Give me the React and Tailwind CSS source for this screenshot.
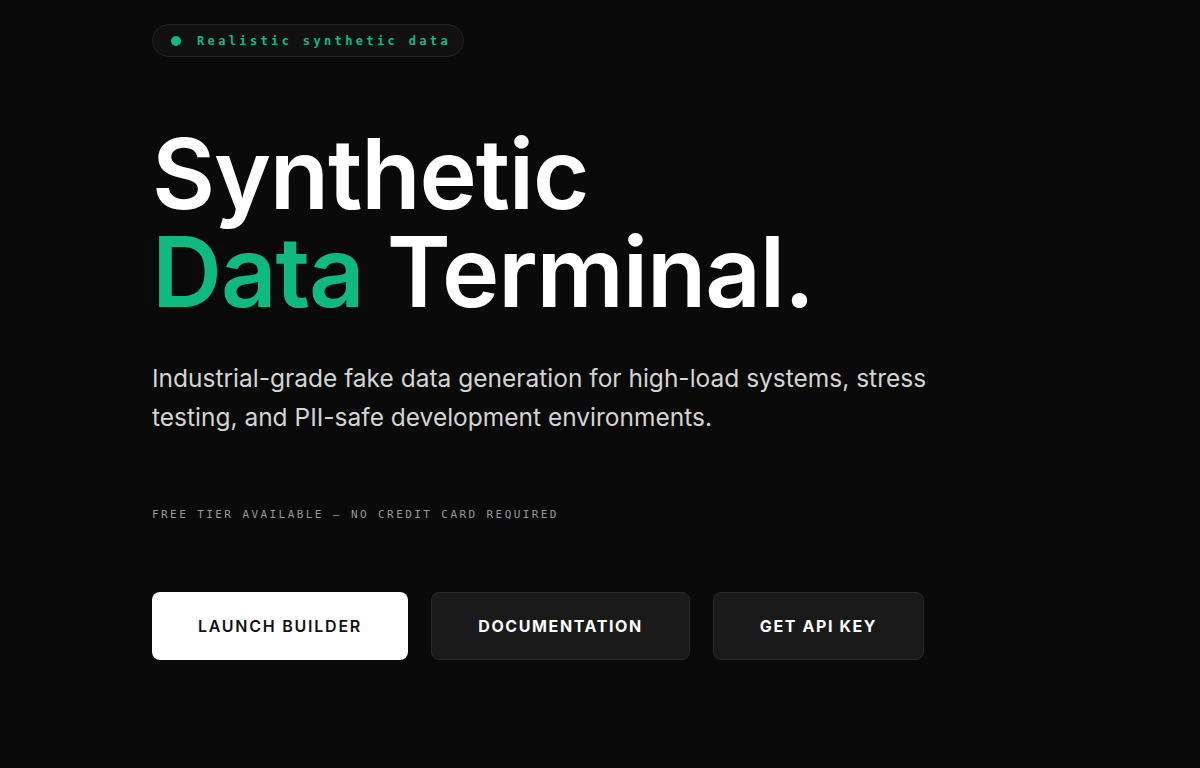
export default function App() {
  return (
    <div className="min-h-[768px] w-full bg-[#0a0a0a] text-white" style={{ fontFamily: "Inter, 'Noto Sans', sans-serif" }}>
      <div className="pl-[152px] pt-[24px]">
        <div className="inline-flex h-[33px] items-center gap-[16px] rounded-full border border-[#262626] bg-[#111111] pl-[18px] pr-[12px]">
          <span className="h-[10px] w-[10px] rounded-full bg-[#10b981]"></span>
          <span className="text-[12px] font-bold tracking-[0.28em] text-[#10b981]" style={{ fontFamily: "'DejaVu Sans Mono', 'Liberation Mono', monospace" }}>
            Realistic synthetic data
          </span>
        </div>
        <h1 className="mt-[68px] text-[97px] font-semibold leading-[98px] tracking-[-0.012em]">
          <span className="block">Synthetic</span>
          <span className="block"><span className="text-[#10b981]">Data</span> Terminal.</span>
        </h1>
        <p className="mt-[38px] max-w-[790px] text-[24.5px] leading-[39px] text-[#d4d4d4]">
          Industrial-grade fake data generation for high-load systems, stress testing, and PII-safe development environments.
        </p>
        <p className="mt-[70px] text-[11px] tracking-[0.22em] text-[#999999]" style={{ fontFamily: "'DejaVu Sans Mono', 'Liberation Mono', monospace" }}>
          FREE TIER AVAILABLE — NO CREDIT CARD REQUIRED
        </p>
        <div className="mt-[68px] flex gap-[23px]">
          <button className="h-[68px] w-[256px] rounded-[8px] bg-white text-[16px] font-semibold tracking-[0.11em] text-[#111]">LAUNCH BUILDER</button>
          <button className="h-[68px] w-[259px] rounded-[8px] border border-[#2a2a2a] bg-[#1a1a1a] text-[16px] font-bold tracking-[0.1em] text-white">DOCUMENTATION</button>
          <button className="h-[68px] w-[211px] rounded-[8px] border border-[#2a2a2a] bg-[#1a1a1a] text-[16px] font-bold tracking-[0.1em] text-white">GET API KEY</button>
        </div>
      </div>
    </div>
  );
}
